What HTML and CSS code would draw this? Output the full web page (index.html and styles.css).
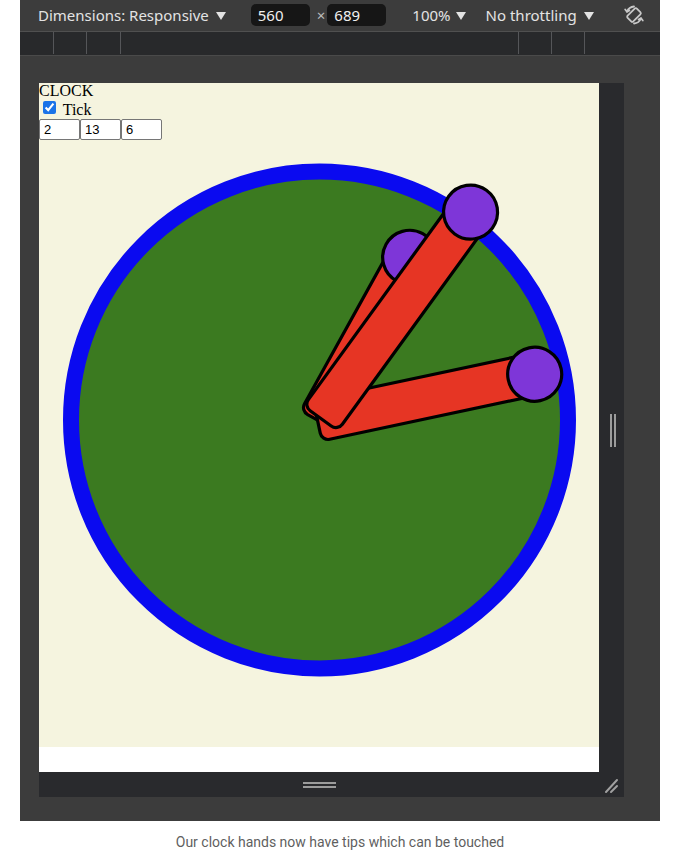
FILE: index.html
```html
<!DOCTYPE html>
<html>
<head>
<meta charset="utf-8">
<link rel="stylesheet" href="styles.css">
</head>
<body>
<div class="frame">
  <div class="toolbar">
    <span class="label dims">Dimensions: Responsive</span><span class="caret"></span>
    <span class="box box1">560</span>
    <span class="times">×</span>
    <span class="box">689</span>
    <span class="label zoom">100%</span><span class="caret caret-sm"></span>
    <span class="label throttle">No throttling</span><span class="caret"></span>
    <svg class="rotate" width="24" height="24" viewBox="0 0 24 24">
      <g fill="none" stroke="#c8c8c8" stroke-width="1.8" stroke-linecap="round">
        <rect x="8" y="5.5" width="8" height="13" rx="1.5" transform="rotate(45 12 12)"/>
        <path d="M5 8.5 A8.5 8.5 0 0 1 12 3.5"/>
        <path d="M19 15.5 A8.5 8.5 0 0 1 12 20.5"/>
        <path d="M3.2 6.5 L5 8.8 L7.4 7.4"/>
        <path d="M20.8 17.5 L19 15.2 L16.6 16.6"/>
      </g>
    </svg>
  </div>
  <div class="rulers">
    <div class="ticks left"><i></i><i></i><i></i></div>
    <div class="ticks right"><i></i><i></i><i></i></div>
  </div>
  <div class="stage">
    <div class="device">
      <div class="viewport">
        <div class="page">
          <div class="title">CLOCK</div>
          <div class="tick"><input type="checkbox" checked> Tick</div>
          <div class="inputs"><input type="text" value="2"><input type="text" value="13"><input type="text" value="6"></div>
          <svg class="clock" width="560" height="607" viewBox="0 0 560 607">
            <circle cx="280.5" cy="280" r="248.5" fill="#3b7a20" stroke="#0a0af0" stroke-width="16"/>
            <g stroke="#000" stroke-width="3.2">
              <g transform="translate(280.5 280) rotate(29)">
                <rect x="-21" y="-186" width="42" height="187" rx="8" fill="#e63524"/>
                <circle cx="0" cy="-186" r="27" fill="#7e36d8"/>
              </g>
              <g transform="translate(280.5 280) rotate(78)">
                <rect x="-21" y="-220" width="42" height="222" rx="8" fill="#e63524"/>
                <circle cx="0" cy="-220" r="27" fill="#7e36d8"/>
              </g>
              <g transform="translate(280.5 280) rotate(36)">
                <rect x="-21" y="-257" width="42" height="255" rx="8" fill="#e63524"/>
                <circle cx="0" cy="-257" r="27" fill="#7e36d8"/>
              </g>
            </g>
          </svg>
        </div>
      </div>
      <div class="handle-right"><span class="grip-v"></span></div>
      <div class="handle-bottom"><span class="grip-h"></span></div>
      <div class="handle-corner">
        <svg width="25" height="25" viewBox="0 0 25 25"><g stroke="#a0a0a0" stroke-width="2" stroke-linecap="round"><path d="M7 20 L18 8"/><path d="M12 20 L18 14"/></g></svg>
      </div>
    </div>
  </div>
</div>
<p class="caption">Our clock hands now have tips which can be touched</p>
</body>
</html>
```
FILE: styles.css
```css
html, body {
  margin: 0;
  padding: 0;
  background: #ffffff;
}
.frame {
  margin-left: 20px;
  width: 640px;
  height: 821px;
  background: #3c3c3c;
  display: flex;
  flex-direction: column;
}
.toolbar {
  height: 32px;
  display: flex;
  align-items: center;
  padding-left: 18px;
  padding-bottom: 1px;
  font-family: "Noto Sans", sans-serif;
  font-size: 15px;
  color: #e3e3e3;
  box-sizing: border-box;
  border-bottom: 1px solid #505050;
}
.caret {
  display: inline-block;
  width: 0;
  height: 0;
  border-left: 5px solid transparent;
  border-right: 5px solid transparent;
  border-top: 8px solid #e3e3e3;
  margin-left: 7px;
  margin-top: 1px;
}
.caret-sm { margin-left: 5px; }
.box {
  display: inline-block;
  width: 59px;
  height: 22px;
  line-height: 22px;
  background: #161616;
  border-radius: 5px;
  padding-left: 7px;
  box-sizing: border-box;
  color: #f0f0f0;
}
.box1 { margin-left: 25px; }
.times {
  margin: 0 2px 0 7px;
  color: #bdbdbd;
}
.zoom { margin-left: 26px; }
.throttle { margin-left: 20px; }
.rotate { margin-left: 28px; }
.rulers {
  height: 24px;
  background: #28292b;
  border-bottom: 1px solid #4a4a4a;
  box-sizing: border-box;
  position: relative;
  display: flex;
  justify-content: space-between;
}
.ticks {
  display: flex;
  height: 22px;
}
.ticks i {
  display: block;
  width: 1px;
  height: 22px;
  background: #555659;
}
.ticks.left { margin-left: 33px; gap: 32px; }
.ticks.left i:nth-child(3) { margin-left: 1px; }
.ticks.right { margin-right: 75px; gap: 32px; }
.stage {
  padding: 27px 0 0 19px;
}
.device {
  display: grid;
  grid-template-columns: 560px 25px;
  grid-template-rows: 689px 25px;
}
.viewport {
  background: #ffffff;
  overflow: hidden;
}
.page {
  height: 664px;
  background: #f5f4df;
  font-family: "Liberation Serif", serif;
  font-size: 16px;
  color: #000;
}
.title {
  line-height: 16px;
  height: 18px;
}
.tick {
  height: 18px;
  line-height: 18px;
}
.tick input {
  margin: 0 3px 0 4px;
  width: 13px;
  height: 13px;
  vertical-align: 1px;
  accent-color: #1a73e8;
}
.inputs {
  display: flex;
  height: 21px;
}
.inputs input {
  width: 41px;
  height: 21px;
  box-sizing: border-box;
  font-family: "Liberation Sans", sans-serif;
  font-size: 13px;
  padding: 1px 4px;
  margin: 0;
  border: 1px solid #767676;
  border-radius: 2px;
  background: #fff;
}
.clock {
  display: block;
}
.handle-right {
  background: #292a2d;
  display: flex;
  align-items: center;
  justify-content: center;
}
.grip-v {
  width: 6px;
  height: 33px;
  border-left: 2px solid #9c9c9c;
  border-right: 2px solid #9c9c9c;
  box-sizing: border-box;
  margin-top: 6px;
  margin-left: 2px;
}
.handle-bottom {
  background: #292a2d;
  display: flex;
  align-items: center;
  justify-content: center;
}
.grip-h {
  width: 33px;
  height: 6px;
  border-top: 2px solid #9c9c9c;
  border-bottom: 2px solid #9c9c9c;
  box-sizing: border-box;
  margin-top: 1px;
}
.handle-corner {
  background: #292a2d;
}
.handle-corner svg { display: block; }
.caption {
  margin: 13px 0 0 0;
  text-align: center;
  font-family: Roboto, sans-serif;
  font-size: 14px;
  color: #5f5f5f;
}
```
